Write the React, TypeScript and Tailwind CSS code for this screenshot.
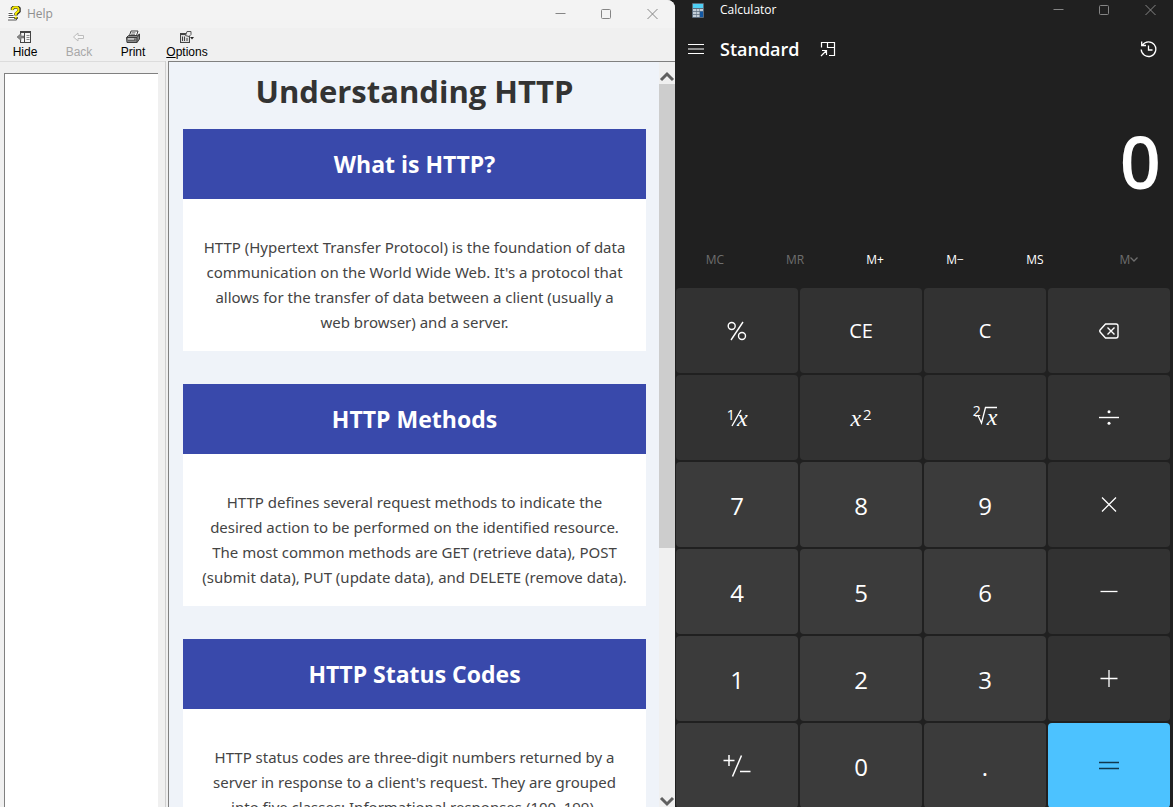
import React from "react";

type Section = { title: string; text: string[] };

const sections: Section[] = [
  {
    title: "What is HTTP?",
    text: [
      "HTTP (Hypertext Transfer Protocol) is the foundation of data",
      "communication on the World Wide Web. It's a protocol that",
      "allows for the transfer of data between a client (usually a",
      "web browser) and a server.",
    ],
  },
  {
    title: "HTTP Methods",
    text: [
      "HTTP defines several request methods to indicate the",
      "desired action to be performed on the identified resource.",
      "The most common methods are GET (retrieve data), POST",
      "(submit data), PUT (update data), and DELETE (remove data).",
    ],
  },
  {
    title: "HTTP Status Codes",
    text: [
      "HTTP status codes are three-digit numbers returned by a",
      "server in response to a client's request. They are grouped",
      "into five classes: Informational responses (100–199),",
    ],
  },
];

function WindowButtons({ className }: { className: string }) {
  return (
    <div className={className}>
      <button aria-label="Minimize" className="flex h-full w-[46px] items-center justify-center">
        <svg width="11" height="11" viewBox="0 0 11 11" fill="none" stroke="currentColor">
          <path d="M0.5 4.5h10" />
        </svg>
      </button>
      <button aria-label="Maximize" className="flex h-full w-[46px] items-center justify-center">
        <svg width="11" height="11" viewBox="0 0 11 11" fill="none" stroke="currentColor">
          <rect x="0.5" y="0.5" width="9" height="9" rx="1" />
        </svg>
      </button>
      <button aria-label="Close" className="flex h-full w-[46px] items-center justify-center">
        <svg width="11" height="11" viewBox="0 0 11 11" fill="none" stroke="currentColor">
          <path d="M0.500 0l10 10M10.500 0l-10 10" />
        </svg>
      </button>
    </div>
  );
}

function HelpIcon() {
  return (
    <svg width="14" height="16" viewBox="0 0 14 16" aria-hidden="true">
      <path d="M1 6h6l2 2v6H1z" fill="#fff" />
      <path d="M1.500 7.500h4M1.500 9.500h5M1.500 11.500h6M1 14h8.500V11" fill="none" stroke="#555" />
      <path d="M5.500 4V2.500L7 1h3.500L12 2.500v2.700L9 8v1.500M9 11v2" fill="none" stroke="#222" strokeWidth="3.400" />
      <path d="M5.500 4.200V2.500L7 1.200h3.500L11.500 2.500v2.500L8.800 7.500v1.700M8.800 10.500v2" fill="none" stroke="#f6ea00" strokeWidth="2" />
    </svg>
  );
}

function HideIcon() {
  return (
    <svg width="16" height="14" viewBox="0 0 16 14" fill="none" stroke="#444" aria-hidden="true">
      <rect x="3.500" y="1.500" width="10" height="11" fill="#f4f4f4" />
      <path d="M3 2.500h11M7.500 2v10" />
      <path d="M9.500 5.500h3M9.500 7.500h3M9.500 9.500h3" stroke="#888" />
      <path d="M0 7l4-3.500v2.500h3v2H4v2.500z" fill="#888" stroke="#555" strokeWidth="0.500" />
    </svg>
  );
}

function BackIcon() {
  return (
    <svg width="16" height="14" viewBox="0 0 16 14" fill="#f6f6f6" stroke="#bdbdbd" aria-hidden="true">
      <path d="M2.500 7L7 3v2.500h5.500v3H7V11z" />
    </svg>
  );
}

function PrintIcon() {
  return (
    <svg width="16" height="14" viewBox="0 0 16 14" fill="none" stroke="#3c3c3c" aria-hidden="true">
      <path d="M4.500 5.500l1.500-4.500h7l-1.500 4.500" fill="#fff" />
      <path d="M6.500 2.800h4M6 4.300h4" strokeWidth="0.700" />
      <path d="M1.500 7.500l2-2h9l2-1.500v5l-2.500 3.500h-10z" fill="#8a8a8a" />
      <path d="M1.500 7.500h10.500l2.500-3M12 7.500v5M3 10h7.500" />
      <path d="M3 9h6" stroke="#fff" />
    </svg>
  );
}

function OptionsIcon() {
  return (
    <svg width="16" height="14" viewBox="0 0 16 14" fill="none" stroke="#444" aria-hidden="true">
      <rect x="1.500" y="3.500" width="9" height="9" fill="#ddd" />
      <path d="M1 4.500h8M3.500 6.500v4.500M5.500 6.500v4.500M8 8v3" />
      <path d="M6.500 5.500l1.500-4h4v3l-2 2z" fill="#eee" stroke="#555" />
      <path d="M11 7h4l-2 2.500z" fill="#222" stroke="none" />
    </svg>
  );
}

function Tool({ icon, children, disabled }: { icon: React.ReactNode; children: React.ReactNode; disabled?: boolean }) {
  return (
    <button disabled={disabled} className="flex w-[50px] flex-col items-center pt-[2px] text-black disabled:text-[#a8a8a8]">
      {icon}
      <span className="text-[12px] leading-[16px]">{children}</span>
    </button>
  );
}

function HelpWindow() {
  return (
    <section className="flex min-w-0 flex-1 flex-col overflow-hidden rounded-tr-lg bg-[#f0f0f0]">
      <header className="flex h-7 shrink-0 items-center bg-[#f3f3f3] pl-[7px] text-[#8f8f8f]">
        <HelpIcon />
        <span className="ml-[6px] flex-1 text-[12px]">Help</span>
        <WindowButtons className="flex h-full text-[#858585]" />
      </header>
      <div className="flex h-[33px] shrink-0 gap-1 font-['Liberation_Sans',sans-serif]">
        <Tool icon={<HideIcon />}>Hide</Tool>
        <Tool icon={<BackIcon />} disabled>Back</Tool>
        <Tool icon={<PrintIcon />}>Print</Tool>
        <Tool icon={<OptionsIcon />}><u>O</u>ptions</Tool>
      </div>
      <div className="flex min-h-0 flex-1">
        <div className="w-[165px] shrink-0 border-t border-[#dcdcdc] pt-[11px] pr-[7px] pl-1">
          <div className="h-full border-t border-l border-[#808080] bg-white" />
        </div>
        <div className="flex min-w-0 flex-1 border-l border-[#d0d0d0] pl-[2px]">
          <div className="flex min-w-0 flex-1 border-t border-l border-[#808080]">
            <article className="min-w-0 flex-1 overflow-hidden bg-[#eff3f9] pr-[13px] pl-[14px] text-center text-[#333]">
              <h1 className="pt-[7px] pb-4 text-[31px] leading-[44px] font-bold">Understanding HTTP</h1>
              {sections.map((s) => (
                <section key={s.title} className="mb-[33px]">
                  <h2 className="bg-[#3949ab] py-[18px] text-[23px] leading-[34px] font-bold text-white">{s.title}</h2>
                  <p className="bg-white pt-9 pb-4 font-['Noto_Sans',sans-serif] text-[15px] leading-[25px] text-[#444]">
                    {s.text.map((line) => (
                      <span key={line} className="block whitespace-nowrap">{line}</span>
                    ))}
                  </p>
                </section>
              ))}
            </article>
            <div className="flex w-4 shrink-0 flex-col items-center bg-[#f0f0f0] text-[#606060]">
              <svg width="16" height="22" viewBox="0 0 16 22" fill="none" stroke="currentColor" strokeWidth="3" aria-hidden="true">
                <path d="M2 18l6-6 6 6" />
              </svg>
              <div className="w-full flex-[464] bg-[#cdcdcd]" />
              <div className="flex-[242]" />
              <svg width="16" height="17" viewBox="0 0 16 17" fill="none" stroke="currentColor" strokeWidth="3" aria-hidden="true">
                <path d="M2 8l6 6 6-6" />
              </svg>
            </div>
          </div>
        </div>
      </div>
    </section>
  );
}

function Glyph({ d, size = 20, width = 1.3 }: { d: string; size?: number; width?: number }) {
  return (
    <svg width={size} height={size} viewBox="0 0 20 20" fill="none" stroke="currentColor" strokeWidth={width} aria-hidden="true">
      <path d={d} />
    </svg>
  );
}

function CalculatorIcon() {
  return (
    <svg width="12" height="15" viewBox="0 0 12 15" aria-hidden="true">
      <rect width="12" height="15" rx="1" fill="#5a6b7c" />
      <rect x="1" y="1" width="10" height="4" fill="#4fd0f5" />
      <path d="M1 6h3v2.300H1zM4.500 6h3v2.300h-3zM8 6h3v2.300H8zM1 9h3v2.300H1zM4.500 9h3v2.300h-3zM1 12h3v2H1zM4.500 12h3v2h-3z" fill="#c3ced8" />
      <path d="M8 8.500h3V14H8z" fill="#1258a4" />
    </svg>
  );
}

type Key = { label: string; content: React.ReactNode; kind: "op" | "num" | "eq" };

const x = <span className="font-['Liberation_Serif',serif] text-[24px] leading-6 italic">x</span>;

const num = (n: string): Key => ({ label: n, content: n, kind: "num" });

const keys: Key[] = [
  {
    label: "Percent",
    kind: "op",
    content: (
      <svg width="20" height="20" viewBox="0 0 20 20" fill="none" stroke="currentColor" strokeWidth="1.400" aria-hidden="true">
        <circle cx="4.700" cy="5" r="3.500" />
        <circle cx="15" cy="15" r="3.500" />
        <path d="M16 1L4 19" />
      </svg>
    ),
  },
  { label: "Clear entry", kind: "op", content: "CE" },
  { label: "Clear", kind: "op", content: "C" },
  {
    label: "Backspace",
    kind: "op",
    content: (
      <svg width="20" height="16" viewBox="0 0 20 16" fill="none" stroke="currentColor" strokeWidth="1.400" aria-hidden="true">
        <path d="M6.500 1H17a2 2 0 0 1 2 2v10a2 2 0 0 1-2 2H6.500L1.300 9.200a1.800 1.800 0 0 1 0-2.400z" strokeLinejoin="round" />
        <path d="M8.500 4.500l7 7M15.500 4.500l-7 7" />
      </svg>
    ),
  },
  {
    label: "Reciprocal",
    kind: "op",
    content: (
      <span className="flex items-center">
        <span className="self-start text-[15px] leading-4">1</span>
        <svg width="12" height="20" viewBox="0 0 12 20" fill="none" stroke="currentColor" strokeWidth="1.400" className="-mx-[5px]" aria-hidden="true">
          <path d="M11 2L2 18" />
        </svg>
        {x}
      </span>
    ),
  },
  {
    label: "Square",
    kind: "op",
    content: (
      <span className="flex items-center">
        {x}
        <span className="ml-[2px] self-start text-[15px] leading-4">2</span>
      </span>
    ),
  },
  {
    label: "Square root",
    kind: "op",
    content: (
      <span className="flex items-center">
        <span className="self-start text-[14px] leading-4">2</span>
        <span className="relative -ml-[6px] pl-3">
          <svg width="22" height="20" viewBox="0 0 22 20" fill="none" stroke="currentColor" strokeWidth="1.300" className="absolute top-[2px] left-0" aria-hidden="true">
            <path d="M0.500 11.500l2.500-1 3.500 7.500L10.500 2.500H22" />
          </svg>
          {x}
        </span>
      </span>
    ),
  },
  {
    label: "Divide",
    kind: "op",
    content: (
      <svg width="20" height="20" viewBox="0 0 20 20" aria-hidden="true">
        <path d="M0 9.500h20" stroke="currentColor" strokeWidth="1.400" />
        <circle cx="10" cy="3.800" r="1.500" fill="currentColor" />
        <circle cx="10" cy="15.300" r="1.500" fill="currentColor" />
      </svg>
    ),
  },
  num("7"),
  num("8"),
  num("9"),
  { label: "Multiply", kind: "op", content: <Glyph d="M3 2.500l14 14M17 2.500l-14 14" /> },
  num("4"),
  num("5"),
  num("6"),
  { label: "Minus", kind: "op", content: <Glyph d="M1.500 9.500h17" /> },
  num("1"),
  num("2"),
  num("3"),
  { label: "Plus", kind: "op", content: <Glyph d="M1.500 9.500h17M10 1v17" /> },
  {
    label: "Positive negative",
    kind: "num",
    content: (
      <svg width="28" height="24" viewBox="0 0 28 24" fill="none" stroke="currentColor" strokeWidth="1.500" aria-hidden="true">
        <path d="M0.500 5.500h11M6 0v11M18.500 0.500L9.500 21.500M17 16.500h10.500" />
      </svg>
    ),
  },
  num("0"),
  num("."),
  { label: "Equals", kind: "eq", content: <Glyph d="M0 6.500h20M0 12.500h20" /> },
];

const keyStyles: Record<Key["kind"], string> = {
  op: "bg-[#323232] text-[20px]",
  num: "bg-[#3b3b3b] text-[24px] pt-[2px]",
  eq: "bg-[#4cc2ff] text-[#10384e]",
};

function Calculator() {
  return (
    <section className="flex w-[498px] shrink-0 flex-col bg-[#202020] text-white">
      <header className="flex h-5 shrink-0 items-center pl-[17px]">
        <CalculatorIcon />
        <span className="ml-4 flex-1 text-[12px]">Calculator</span>
        <WindowButtons className="flex h-full text-[#858585]" />
      </header>
      <div className="flex h-[58px] shrink-0 items-center pr-4 pl-[13px]">
        <button aria-label="Open navigation">
          <svg width="16" height="12" viewBox="0 0 16 12" stroke="currentColor" aria-hidden="true">
            <path d="M0 1.500h16M0 6h16M0 10.500h16" />
          </svg>
        </button>
        <h1 className="ml-4 text-[18px] leading-7 font-semibold">Standard</h1>
        <button aria-label="Keep on top" className="ml-5">
          <svg width="16" height="16" viewBox="0 0 16 16" fill="none" stroke="currentColor" strokeWidth="1.200" aria-hidden="true">
            <path d="M1.500 6.500v-5h13v13H9M7.500 1.500v5h7M2 9.500h4.500V14M6.500 9.500L1 15" />
          </svg>
        </button>
        <button aria-label="History" className="ml-auto">
          <svg width="17" height="17" viewBox="0 0 17 17" fill="none" stroke="currentColor" strokeWidth="1.300" aria-hidden="true">
            <path d="M2.500 4A7.300 7.300 0 1 1 1.200 8.500M1.700 0.500v4H6M8.500 4.500v4.500h4" />
          </svg>
        </button>
      </div>
      <div className="flex flex-1 flex-col pt-[34px]">
        <output className="pr-3 text-right text-[72px] leading-[98px] font-semibold">0</output>
      </div>
      <div className="flex h-[57px] shrink-0 items-center text-[12px]">
        <button disabled className="w-20 text-[#6e6e6e]">MC</button>
        <button disabled className="w-20 text-[#6e6e6e]">MR</button>
        <button className="w-20">M+</button>
        <button className="w-20">M−</button>
        <button className="w-20">MS</button>
        <button disabled className="mr-1 ml-auto flex w-20 items-center justify-center text-[#6e6e6e]">
          M
          <svg width="8" height="5" viewBox="0 0 8 5" fill="none" stroke="currentColor" strokeWidth="1.300" aria-hidden="true">
            <path d="M0.500 0.500L4 4l3.500-3.500" />
          </svg>
        </button>
      </div>
      <div className="-mb-px grid shrink-0 grid-cols-4 gap-[2px] pr-[3px] pl-px">
        {keys.map((k) => (
          <button key={k.label} aria-label={k.label} className={`flex h-[85px] items-center justify-center rounded ${keyStyles[k.kind]}`}>
            {k.content}
          </button>
        ))}
      </div>
    </section>
  );
}

export default function App() {
  return (
    <main className="flex h-screen overflow-hidden bg-[#202020] font-['Open_Sans','Noto_Sans',sans-serif]">
      <HelpWindow />
      <Calculator />
    </main>
  );
}
